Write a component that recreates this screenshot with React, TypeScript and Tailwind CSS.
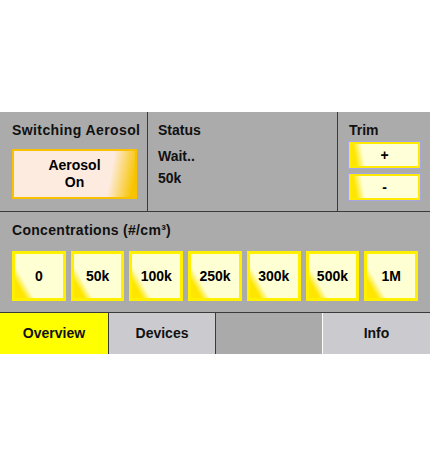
import React from 'react';

const font = { fontFamily: '"Liberation Sans", Arial, sans-serif' };

const concentrations = ['0', '50k', '100k', '250k', '300k', '500k', '1M'];

function TrimButton({ label }: { label: string }) {
  return (
    <button className="h-[26px] w-[71px] border-2 border-[#ffea00] outline outline-1 outline-[#a6a6e6] bg-[linear-gradient(80deg,#ffe600_0%,#ffe600_8%,#ffffd8_20%,#ffffd8_100%)] text-[14px] font-bold text-black leading-none">
      {label}
    </button>
  );
}

function ConcButton({ label }: { label: string }) {
  return (
    <button className="h-[50px] border-[3px] border-[#fff000] bg-[linear-gradient(60deg,#ffe600_0%,#ffe600_14%,#ffffd4_26%,#ffffd4_100%)] text-[14px] font-bold text-black">
      {label}
    </button>
  );
}

export default function App() {
  return (
    <div className="w-[430px] h-[467px] bg-white pt-[112px] text-[#111]" style={font}>
      <div className="bg-[#ababab]">
        {/* top row */}
        <div className="flex h-[100px] border-b border-[#3a3a3a]">
          <div className="w-[148px] border-r border-[#3a3a3a] pl-[12px] pt-[9px]">
            <div className="text-[14px] font-bold leading-[18px] tracking-[0.4px]">Switching Aerosol</div>
            <button className="mt-[10px] h-[50px] w-[125px] border-2 border-[#f7c000] bg-[linear-gradient(100deg,#fdebe0_0%,#fdebe0_78%,#f8c400_97%)] text-[14px] font-bold leading-[17px] text-black">
              Aerosol
              <br />
              On
            </button>
          </div>
          <div className="w-[190px] border-r border-[#3a3a3a] pl-[10px] pt-[9px] text-[14px] font-bold leading-[18px]">
            <div>Status</div>
            <div className="mt-[8px]">Wait..</div>
            <div className="mt-[4px]">50k</div>
          </div>
          <div className="flex-1 pl-[11px] pt-[9px]">
            <div className="text-[14px] font-bold leading-[18px]">Trim</div>
            <div className="mt-[3px] flex flex-col gap-[6px]">
              <TrimButton label="+" />
              <TrimButton label="-" />
            </div>
          </div>
        </div>

        {/* concentrations */}
        <div className="h-[101px] border-b border-[#3a3a3a] px-[12px] pt-[9px]">
          <div className="text-[14px] font-bold leading-[18px] tracking-[0.3px]">
            Concentrations (#/cm³)
          </div>
          <div className="mt-[12px] grid grid-cols-7 gap-[5px]">
            {concentrations.map(c => (
              <ConcButton key={c} label={c} />
            ))}
          </div>
        </div>
      </div>

      {/* tabs */}
      <div className="grid h-[42px] grid-cols-[108px_107px_107px_108px] border-b border-white text-[14px] font-bold">
        <div className="flex items-center justify-center bg-[#ffff00]">Overview</div>
        <div className="flex items-center justify-center border-l border-[#3a3a3a] bg-[#cbcbcf]">Devices</div>
        <div className="border-l border-[#3a3a3a] bg-[#aaaaaa]" />
        <div className="flex items-center justify-center border-l border-white bg-[#cbcbcf]">Info</div>
      </div>
    </div>
  );
}
